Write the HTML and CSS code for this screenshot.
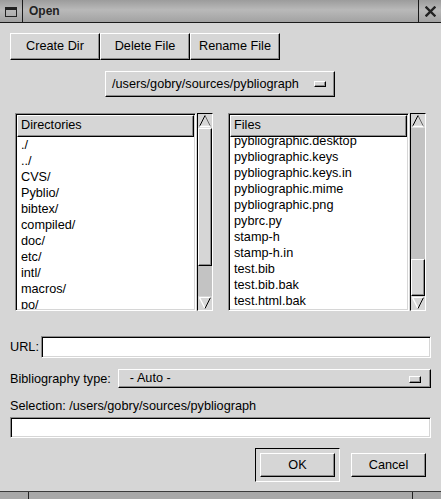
FILE: index.html
```html
<!DOCTYPE html>
<html>
<head>
<meta charset="utf-8">
<title>Open</title>
<link rel="stylesheet" href="styles.css">
</head>
<body>
<div class="window">
  <div class="titlebar">
    <div class="tb-icon">
      <svg width="12" height="10" viewBox="0 0 12 10"><rect x="0.5" y="0.5" width="11" height="9" fill="none" stroke="#222" stroke-width="1"/><rect x="0" y="0" width="12" height="3" fill="#222"/></svg>
    </div>
    <div class="tb-title">Open</div>
    <div class="tb-close">
      <svg width="11" height="11" viewBox="0 0 11 11"><path d="M1.5 1.5 L9.5 9.5 M9.5 1.5 L1.5 9.5" stroke="#222" stroke-width="2.4" stroke-linecap="square"/></svg>
    </div>
  </div>

  <div class="toolbar">
    <div class="btn tool">Create Dir</div>
    <div class="btn tool">Delete File</div>
    <div class="btn tool">Rename File</div>
  </div>

  <div class="pathrow">
    <div class="optmenu path">
      <span class="opt-text">/users/gobry/sources/pybliograph</span>
      <span class="indicator"></span>
    </div>
  </div>

  <div class="panes">
    <div class="pane">
      <div class="list">
        <div class="list-header">Directories</div>
        <div class="list-body">
          <div class="rows">
            <div class="row">./</div>
            <div class="row">../</div>
            <div class="row">CVS/</div>
            <div class="row">Pyblio/</div>
            <div class="row">bibtex/</div>
            <div class="row">compiled/</div>
            <div class="row">doc/</div>
            <div class="row">etc/</div>
            <div class="row">intl/</div>
            <div class="row">macros/</div>
            <div class="row">po/</div>
          </div>
        </div>
      </div>
      <div class="vscroll">
        <div class="arrow">
          <svg width="14" height="14" viewBox="0 0 14 14"><polygon points="7,1.5 1.5,12.5 12.5,12.5" fill="#d6d6d6"/><path d="M1.5 12.5 L7 1.5" stroke="#000" stroke-width="1"/><path d="M7 1.5 L12.5 12.5" stroke="#666" stroke-width="1"/><path d="M1.5 12.5 L12.5 12.5" stroke="#fff" stroke-width="1.6"/></svg>
        </div>
        <div class="track">
          <div class="thumb" style="margin-top:0px;height:138px"></div>
        </div>
        <div class="arrow">
          <svg width="14" height="14" viewBox="0 0 14 14"><polygon points="1.5,1.5 12.5,1.5 7,12.5" fill="#d6d6d6"/><path d="M1.5 1.5 L7 12.5" stroke="#fff" stroke-width="1.4"/><path d="M7 12.5 L12.5 1.5" stroke="#000" stroke-width="1"/><path d="M1.5 1.5 L12.5 1.5" stroke="#fff" stroke-width="1"/></svg>
        </div>
      </div>
    </div>

    <div class="pane">
      <div class="list">
        <div class="list-header">Files</div>
        <div class="list-body">
          <div class="rows scrolled">
            <div class="row">pybliographic.desktop</div>
            <div class="row">pybliographic.keys</div>
            <div class="row">pybliographic.keys.in</div>
            <div class="row">pybliographic.mime</div>
            <div class="row">pybliographic.png</div>
            <div class="row">pybrc.py</div>
            <div class="row">stamp-h</div>
            <div class="row">stamp-h.in</div>
            <div class="row">test.bib</div>
            <div class="row">test.bib.bak</div>
            <div class="row">test.html.bak</div>
          </div>
        </div>
      </div>
      <div class="vscroll">
        <div class="arrow">
          <svg width="14" height="14" viewBox="0 0 14 14"><polygon points="7,1.5 1.5,12.5 12.5,12.5" fill="#d6d6d6"/><path d="M1.5 12.5 L7 1.5" stroke="#000" stroke-width="1"/><path d="M7 1.5 L12.5 12.5" stroke="#666" stroke-width="1"/><path d="M1.5 12.5 L12.5 12.5" stroke="#fff" stroke-width="1.6"/></svg>
        </div>
        <div class="track">
          <div class="thumb" style="margin-top:131px;height:37px"></div>
        </div>
        <div class="arrow">
          <svg width="14" height="14" viewBox="0 0 14 14"><polygon points="1.5,1.5 12.5,1.5 7,12.5" fill="#d6d6d6"/><path d="M1.5 1.5 L7 12.5" stroke="#fff" stroke-width="1.4"/><path d="M7 12.5 L12.5 1.5" stroke="#000" stroke-width="1"/><path d="M1.5 1.5 L12.5 1.5" stroke="#fff" stroke-width="1"/></svg>
        </div>
      </div>
    </div>
  </div>

  <div class="field-row url-row">
    <span class="label">URL:</span>
    <div class="entry url"></div>
  </div>

  <div class="field-row bib-row">
    <span class="label">Bibliography type:</span>
    <div class="optmenu bib">
      <span class="opt-text">- Auto -</span>
      <span class="indicator"></span>
    </div>
  </div>

  <div class="sel-label">Selection: /users/gobry/sources/pybliograph</div>
  <div class="sel-row">
    <div class="entry sel"></div>
  </div>

  <div class="actions">
    <div class="default-frame">
      <div class="btn action">OK</div>
    </div>
    <div class="btn action">Cancel</div>
  </div>

  <div class="bottombar">
    <div class="bb-seg bb-left"></div>
    <div class="bb-seg bb-mid"></div>
    <div class="bb-seg bb-right"></div>
  </div>
</div>
</body>
</html>
```

FILE: styles.css
```css
* { box-sizing: border-box; }

html, body {
  margin: 0;
  padding: 0;
}

body {
  background: #d6d6d6;
  font-family: "Liberation Sans", Arial, sans-serif;
  font-size: 12.7px;
  color: #000;
  width: 441px;
  height: 499px;
  overflow: hidden;
}

.window {
  display: flex;
  flex-direction: column;
  width: 441px;
  height: 499px;
}

/* Title bar */
.titlebar {
  display: flex;
  height: 23px;
  border-bottom: 1px solid #1a1a1a;
  background: linear-gradient(to bottom, #9c9c9c 0%, #b9b9b9 45%, #a2a2a2 100%);
}

.tb-icon {
  width: 23px;
  border-right: 1px solid #1a1a1a;
  display: flex;
  align-items: center;
  justify-content: center;
  padding-top: 1px;
}

.tb-title {
  flex: 1;
  font-weight: bold;
  font-size: 12px;
  color: #222;
  padding-left: 6px;
  line-height: 22px;
}

.tb-close {
  width: 23px;
  border-left: 1px solid #1a1a1a;
  display: flex;
  align-items: center;
  justify-content: center;
}

/* Generic raised button */
.btn {
  background: #d6d6d6;
  border: 1px solid;
  border-color: #fff #000 #000 #fff;
  box-shadow: inset -1px -1px 0 #8c8c8c;
  display: flex;
  align-items: center;
  justify-content: center;
}

.toolbar {
  display: flex;
  margin: 10px 0 0 10px;
}

.tool {
  width: 90px;
  height: 27px;
  padding-bottom: 1px;
}

/* option menu */
.pathrow {
  display: flex;
  margin-top: 11px;
  padding-left: 105px;
}

.optmenu {
  display: flex;
  align-items: center;
  background: #d6d6d6;
  border: 1px solid;
  border-color: #fff #000 #000 #fff;
  box-shadow: inset -1px -1px 0 #8c8c8c;
}

.opt-text {
  flex: 1;
  white-space: nowrap;
}

.indicator {
  flex: none;
  width: 12px;
  height: 6px;
  border: 1px solid;
  border-color: #fff #000 #000 #fff;
  box-shadow: inset -1px -1px 0 #8c8c8c;
}

.path {
  width: 230px;
  height: 26px;
  padding: 0 8px 1px 6px;
}

.bib {
  flex: 1;
  height: 19px;
  margin-left: 7px;
  padding: 0 9px 1px 11px;
}

.bib .indicator {
  height: 7px;
  margin-top: 3px;
}

/* Lists */
.panes {
  display: flex;
  gap: 15px;
  margin-top: 16px;
  padding: 0 15px;
  height: 198px;
}

.pane {
  display: flex;
  gap: 1px;
  width: 198px;
}

.list {
  width: 181px;
  display: flex;
  flex-direction: column;
  background: #fff;
  border: 1px solid;
  border-color: #8c8c8c #fff #fff #8c8c8c;
  box-shadow: inset 1px 1px 0 #000, inset -1px -1px 0 #d6d6d6;
  padding: 1px;
}

.list-header {
  height: 22px;
  flex: none;
  background: #d6d6d6;
  border: 1px solid;
  border-color: #fff #000 #000 #fff;
  box-shadow: inset -1px -1px 0 #8c8c8c;
  padding-left: 3px;
  line-height: 19px;
}

.list-body {
  flex: 1;
  overflow: hidden;
}

.rows.scrolled {
  margin-top: -4px;
}

.row {
  height: 16px;
  line-height: 16px;
  padding-left: 4px;
  white-space: nowrap;
}

/* Scrollbars */
.vscroll {
  width: 16px;
  display: flex;
  flex-direction: column;
  background: #c3c3c3;
  border: 1px solid;
  border-color: #000 #fff #fff #000;
}

.arrow {
  height: 14px;
  flex: none;
  background: #d6d6d6;
}

.arrow svg {
  display: block;
}

.track {
  flex: 1;
  display: flex;
  flex-direction: column;
}

.thumb {
  flex: none;
  background: #d6d6d6;
  border: 1px solid;
  border-color: #fff #000 #000 #fff;
  box-shadow: inset -1px -1px 0 #8c8c8c;
}

/* Field rows */
.field-row {
  display: flex;
  align-items: center;
  padding: 0 10px;
}

.label {
  white-space: nowrap;
}

.url-row {
  margin-top: 25px;
}

.url-row .label {
  margin-right: 2px;
}

.entry {
  background: #fff;
  border: 1px solid;
  border-color: #8c8c8c #fff #fff #8c8c8c;
  box-shadow: inset 1px 1px 0 #000, inset -1px -1px 0 #d6d6d6;
}

.url {
  flex: 1;
  height: 22px;
}

.bib-row {
  margin-top: 11px;
}

.sel-label {
  margin-top: 11px;
  padding-left: 10px;
  line-height: 14px;
  height: 14px;
  white-space: nowrap;
}

.sel-row {
  display: flex;
  padding: 0 10px;
  margin-top: 4px;
}

.sel {
  flex: 1;
  height: 21px;
}

/* Actions */
.actions {
  display: flex;
  justify-content: flex-end;
  align-items: center;
  gap: 11px;
  margin-top: 10px;
  padding-right: 15px;
  height: 34px;
}

.default-frame {
  width: 85px;
  height: 34px;
  border: 1px solid;
  border-color: #000 #fff #fff #000;
  padding: 4px;
}

.action {
  width: 75px;
  height: 24px;
  padding-bottom: 1px;
}

/* bottom bar */
.bottombar {
  display: flex;
  margin-top: 9px;
  height: 8px;
  border-top: 1px solid #3a3a3a;
  background: #a8a8a8;
}

.bb-seg {
  height: 100%;
}

.bb-left {
  width: 29px;
  border-right: 1px solid #222;
}

.bb-mid {
  flex: 1;
  border-right: 1px solid #222;
}

.bb-right {
  width: 28px;
}
```
